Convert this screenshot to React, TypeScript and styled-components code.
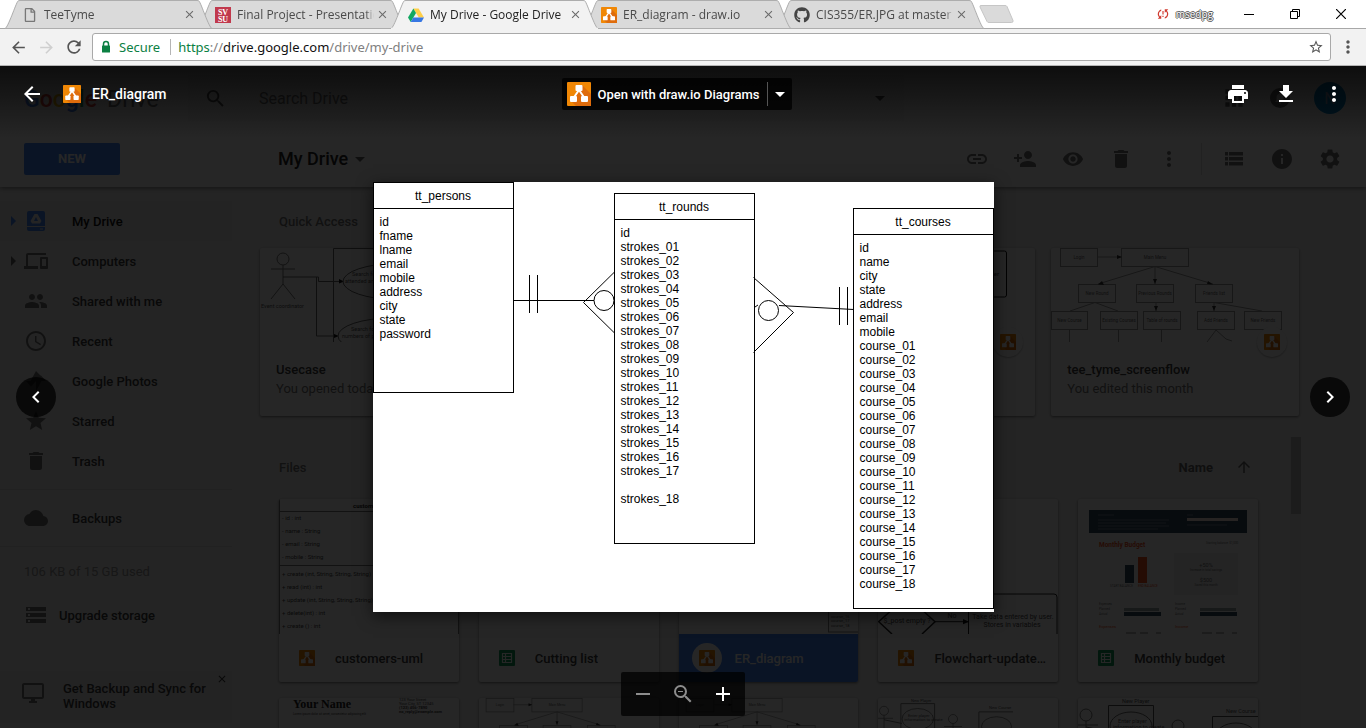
import React from "react";
import styled, { createGlobalStyle, css } from "styled-components";
import {
  MdAdd,
  MdArrowBack,
  MdArrowForward,
  MdArrowDropDown,
  MdArrowUpward,
  MdApps,
  MdChevronLeft,
  MdChevronRight,
  MdClose,
  MdCloud,
  MdDelete,
  MdDevices,
  MdInfo,
  MdInsertLink,
  MdMoreVert,
  MdNotifications,
  MdPeople,
  MdPersonAdd,
  MdPrint,
  MdRefresh,
  MdRemove,
  MdSchedule,
  MdSearch,
  MdSettings,
  MdStar,
  MdStarBorder,
  MdStorage,
  MdSyncProblem,
  MdVisibility,
  MdZoomOut,
} from "react-icons/md";
import { FaGithub, FaRegFile } from "react-icons/fa";

const GlobalStyle = createGlobalStyle`
  *, *::before, *::after { box-sizing: border-box; }
  body { margin: 0; overflow: hidden; font-family: Roboto, sans-serif; }
  button { border: 0; padding: 0; background: none; font: inherit; color: inherit; cursor: pointer; }
  ul { list-style: none; margin: 0; padding: 0; }
  h1, h2, h3, p { margin: 0; font-weight: inherit; font-size: inherit; }
  svg { display: block; flex: none; }
`;

/* ---------- browser frame ---------- */

const Window = styled.div`
  display: flex;
  flex-direction: column;
  height: 100vh;
`;

const TabStrip = styled.div`
  display: flex;
  align-items: stretch;
  height: 29px;
  padding-left: 5px;
  background: #fff;
  border-bottom: 1px solid #a8a8a8;
  font-family: "Open Sans", "Noto Sans", sans-serif;
`;

const Tab = styled.div<{ $active?: boolean; $order: number }>`
  position: relative;
  z-index: ${(p) => (p.$active ? 10 : p.$order)};
  display: flex;
  align-items: center;
  flex: 0 1 207px;
  min-width: 0;
  height: 29px;
  margin-right: -14px;
  padding: 0 16px 0 17px;
  color: ${(p) => (p.$active ? "#222" : "#4a4a4a")};
  font-size: 12px;
`;

const TabShape = styled.svg`
  position: absolute;
  inset: 0;
  width: 100%;
  height: 100%;
  z-index: -1;
`;

const TabIcon = styled.span`
  display: flex;
  justify-content: center;
  width: 16px;
  margin-right: 6px;
`;

const TabTitle = styled.span`
  flex: 1;
  min-width: 0;
  margin-right: 2px;
  overflow: hidden;
  white-space: nowrap;
  mask-image: linear-gradient(to right, #000 94%, transparent);
`;

const TabClose = styled.button`
  display: flex;
  color: #6b6b6b;
`;

const NewTab = styled.button`
  display: flex;
  align-items: center;
  margin-left: 9px;
`;

const WindowTools = styled.div`
  display: flex;
  align-items: center;
  margin-left: auto;
  height: 27px;
  padding-right: 2px;
`;

const ProfileName = styled.span`
  margin: 0 13px 0 6px;
  font-size: 10px;
  color: #fff;
  text-shadow: 1px 0 #555, -1px 0 #555, 0 1px #555, 0 -1px #555;
`;

const WindowButton = styled.button`
  display: flex;
  justify-content: center;
  width: 46px;
`;

const AddressRow = styled.div`
  display: flex;
  align-items: center;
  gap: 4px;
  height: 37px;
  padding: 0 6px;
  background: #f2f2f2;
  border-bottom: 1px solid #b4b4b4;
  color: #5a5a5a;
`;

const ToolButton = styled.button<{ $dim?: boolean }>`
  display: flex;
  justify-content: center;
  width: 24px;
  color: ${(p) => (p.$dim ? "#cfcfcf" : "#555")};
`;

const Omnibox = styled.div`
  display: flex;
  align-items: center;
  flex: 1;
  height: 28px;
  margin: 0 1px 0 2px;
  padding: 0 6px;
  background: #fff;
  border: 1px solid #a9a9a9;
  border-radius: 3px;
  font-family: "Noto Sans", "Open Sans", sans-serif;
  font-size: 13px;
  color: #0b8043;
`;

const SecureLabel = styled.span`
  margin: 0 7px 0 6px;
  padding-right: 10px;
  border-right: 1px solid #b5b5b5;
  line-height: 16px;
`;

const Url = styled.div`
  flex: 1;
  outline: 0;
  white-space: nowrap;
  color: #808080;
`;

const UrlPart = styled.span<{ $tone: "scheme" | "host" }>`
  color: ${(p) => (p.$tone === "scheme" ? "#0b8043" : "#111")};
`;

/* ---------- Drive page ---------- */

const Viewport = styled.main`
  position: relative;
  flex: 1;
  min-height: 0;
  overflow: hidden;
`;

const Drive = styled.div`
  display: flex;
  flex-direction: column;
  height: 100%;
  background: #f1f1f1;
  color: #3c3c3c;
  font-size: 13px;
`;

const DriveTop = styled.header`
  position: relative;
  background: #fff;
  box-shadow: 0 1px 5px rgba(0, 0, 0, 0.5);
`;

const DriveHeader = styled.div`
  display: flex;
  align-items: center;
  height: 64px;
  padding: 0 20px 0 24px;
`;

const Logo = styled.div`
  width: 164px;
  padding-top: 2px;
  font-size: 23px;
  color: #777;
`;

const LogoLetter = styled.span<{ $color: string }>`
  font-weight: 500;
  color: ${(p) => p.$color};
`;

const LogoProduct = styled.span`
  margin-left: 10px;
`;

const SearchBox = styled.label`
  display: flex;
  align-items: center;
  flex: 0 1 716px;
  height: 46px;
  padding: 0 12px 0 16px;
  gap: 30px;
  background: #f5f5f5;
  color: #555;
`;

const SearchInput = styled.input`
  flex: 1;
  min-width: 0;
  border: 0;
  outline: 0;
  background: none;
  font: 16px Roboto, sans-serif;
  &::placeholder {
    color: #757575;
    opacity: 1;
  }
`;

const AccountTools = styled.div`
  display: flex;
  align-items: center;
  gap: 24px;
  margin-left: auto;
`;

const Bell = styled.button`
  display: flex;
  align-items: center;
  justify-content: center;
  width: 20px;
  height: 20px;
  border-radius: 50%;
  background: #6b6b6b;
  color: #ddd;
`;

const Avatar = styled.button`
  width: 32px;
  height: 32px;
  border-radius: 50%;
  background: #0288d1;
  color: #9ac;
  font-size: 16px;
`;

const DriveToolbar = styled.div`
  display: flex;
  align-items: center;
  height: 57px;
  padding: 0 24px;
`;

const NewButton = styled.button`
  width: 96px;
  height: 32px;
  border-radius: 2px;
  background: #4285f4;
  color: #fff;
  font-size: 13px;
  font-weight: 700;
`;

const Breadcrumb = styled.h1`
  display: flex;
  align-items: center;
  margin-left: 158px;
  font-size: 18px;
  font-weight: 500;
  color: #222;
`;

const ActionGroup = styled.div<{ $divided?: boolean }>`
  display: flex;
  align-items: center;
  gap: 24px;
  color: #757575;
  ${(p) =>
    p.$divided
      ? css`
          height: 32px;
          margin-left: 20px;
          padding-left: 20px;
          border-left: 1px solid #ddd;
        `
      : css`
          margin-left: auto;
        `}
`;

const IconButton = styled.button`
  display: flex;
  align-items: center;
  justify-content: center;
  width: 24px;
  height: 24px;
`;

const DriveBody = styled.div`
  display: flex;
  flex: 1;
  min-height: 0;
`;

const Sidebar = styled.aside`
  display: flex;
  flex-direction: column;
  width: 232px;
  padding-top: 14px;
  font-weight: 500;
`;

const NavList = styled.ul`
  padding-bottom: 8px;
  margin-bottom: 8px;
  border-bottom: 1px solid #dcdcdc;
`;

const NavLink = styled.a<{ $active?: boolean }>`
  display: flex;
  align-items: center;
  height: 40px;
  padding-left: 8px;
  color: ${(p) => (p.$active ? "#111" : "#3c3c3c")};
  background: ${(p) => (p.$active ? "#e8e8e8" : "transparent")};
  text-decoration: none;
`;

const NavArrow = styled.span<{ $blue?: boolean }>`
  display: flex;
  width: 16px;
  color: ${(p) => (p.$blue ? "#4285f4" : "#666")};
`;

const NavIcon = styled.span`
  display: flex;
  width: 48px;
  color: #757575;
`;

const Quota = styled.p`
  padding: 9px 24px 7px;
  line-height: 16px;
  font-weight: 400;
  color: #999;
`;

const Upgrade = styled.a`
  display: flex;
  align-items: center;
  gap: 11px;
  height: 32px;
  margin-top: 12px;
  padding-left: 24px;
  color: #3c3c3c;
  text-decoration: none;
`;

const Promo = styled.div`
  display: flex;
  height: 52px;
  margin-top: 40px;
  padding: 10px 4px 0 21px;
  background: #e9e9e9;
  line-height: 15px;
  color: #3c3c3c;
`;

const PromoText = styled.p`
  flex: 1;
  padding-left: 18px;
`;

const PromoClose = styled.button`
  display: flex;
  align-self: flex-start;
  margin-top: -8px;
`;

const Content = styled.section`
  display: flex;
  flex-direction: column;
  flex: 1;
  min-width: 0;
  padding-left: 28px;
`;

const SectionTitle = styled.h2`
  font-weight: 500;
  color: #757575;
`;

const QuickTitle = styled(SectionTitle)`
  height: 61px;
  padding: 26px 0 0 19px;
  line-height: 18px;
`;

const QuickGrid = styled.div`
  display: grid;
  grid-template-columns: repeat(4, 1fr);
  gap: 16px;
  padding-right: 67px;
`;

const Card = styled.article`
  min-width: 0;
  border-radius: 2px;
  background: #fff;
  box-shadow: 0 1px 3px rgba(0, 0, 0, 0.5);
`;

const QuickCard = styled(Card)`
  height: 168px;
`;

const Thumb = styled.div<{ $height: number }>`
  position: relative;
  height: ${(p) => p.$height}px;
  svg {
    overflow: hidden;
  }
`;

const Badge = styled.span`
  position: absolute;
  right: 12px;
  bottom: -15px;
  display: flex;
  align-items: center;
  justify-content: center;
  width: 30px;
  height: 30px;
  border-radius: 50%;
  background: #fff;
  box-shadow: 0 1px 2px rgba(0, 0, 0, 0.3);
`;

const QuickText = styled.div`
  padding: 18px 16px 0;
  line-height: 19px;
  white-space: nowrap;
  color: #757575;
`;

const QuickName = styled.h3`
  font-weight: 500;
  color: #3c3c3c;
`;

const FilesArea = styled.div`
  display: flex;
  flex: 1;
  min-height: 0;
  margin-top: 21px;
  padding: 0 65px 0 19px;
  overflow: hidden;
`;

const FilesColumn = styled.div`
  flex: 1;
  min-width: 0;
`;

const FilesHeader = styled.div`
  display: flex;
  align-items: center;
  justify-content: space-between;
  height: 62px;
  padding: 0 5px 2px 0;
`;

const SortButton = styled.button`
  display: flex;
  align-items: center;
  gap: 22px;
  font-weight: 700;
  color: #666;
`;

const FileGrid = styled.div`
  display: grid;
  grid-template-columns: repeat(5, 1fr);
  gap: 16px 20px;
`;

const ScrollTrack = styled.div`
  width: 11px;
  margin-left: 32px;
  padding-left: 1px;
  background: #eaeaea;
`;

const ScrollThumb = styled.div`
  height: 77px;
  background: #b8b8b8;
`;

const FileCard = styled(Card)`
  overflow: hidden;
`;

const FileFooter = styled.div<{ $selected?: boolean }>`
  display: flex;
  align-items: center;
  height: 48px;
  padding: 0 12px 0 13px;
  gap: 13px;
  color: ${(p) => (p.$selected ? "#fff" : "#3c3c3c")};
  background: ${(p) => (p.$selected ? "#4285f4" : "transparent")};
`;

const FileIcon = styled.span<{ $selected?: boolean }>`
  display: flex;
  align-items: center;
  justify-content: center;
  flex: none;
  width: 30px;
  height: 30px;
  border-radius: 50%;
  background: ${(p) => (p.$selected ? "#fff" : "transparent")};
`;

const FileName = styled.h3`
  overflow: hidden;
  text-overflow: ellipsis;
  white-space: nowrap;
  font-weight: 500;
`;

/* ---------- file viewer ---------- */

const Viewer = styled.div`
  position: absolute;
  inset: 0;
  display: flex;
  flex-direction: column;
  background: linear-gradient(rgba(0, 0, 0, 0.65), transparent 72px),
    rgba(0, 0, 0, 0.85);
  color: #fff;
`;

const ViewerBar = styled.div`
  display: grid;
  grid-template-columns: 1fr auto 1fr;
  align-items: center;
  height: 56px;
  padding: 0 20px;
  font-size: 14px;
  font-weight: 500;
`;

const ViewerTitle = styled.div`
  display: flex;
  align-items: center;
`;

const TitleIcon = styled.span`
  margin: 0 11px 0 19px;
`;

const OpenWith = styled.div`
  display: flex;
  align-items: center;
  height: 32px;
  margin-right: 12px;
  border-radius: 2px;
  background: rgba(0, 0, 0, 0.8);
`;

const OpenButton = styled.button`
  display: flex;
  align-items: center;
  gap: 6px;
  padding: 0 7px 0 5px;
  font-size: 13px;
`;

const OpenMenu = styled.button`
  display: flex;
  align-items: center;
  justify-content: center;
  width: 25px;
  height: 24px;
  border-left: 1px solid #555;
`;

const ViewerActions = styled.div`
  display: flex;
  justify-content: flex-end;
  gap: 24px;
`;

const Stage = styled.div`
  display: flex;
  align-items: center;
  justify-content: space-between;
  flex: 1;
  min-height: 0;
  padding: 0 16px;
`;

const RoundButton = styled.button`
  display: flex;
  align-items: center;
  justify-content: center;
  width: 40px;
  height: 40px;
  border-radius: 50%;
  background: rgba(0, 0, 0, 0.75);
`;

const ZoomRow = styled.div`
  display: flex;
  justify-content: center;
  padding-bottom: 12px;
`;

const ZoomBar = styled.div`
  display: flex;
  align-items: center;
  justify-content: center;
  gap: 16px;
  width: 124px;
  height: 44px;
  border-radius: 2px;
  background: rgba(0, 0, 0, 0.75);
`;

const ZoomButton = styled(IconButton)<{ $dim?: boolean }>`
  color: ${(p) => (p.$dim ? "#8d8d8d" : "#fff")};
`;

/* ---------- ER diagram ---------- */

const Diagram = styled.figure`
  position: relative;
  width: 621px;
  height: 430px;
  margin: 0;
  background: #fff;
  color: #000;
  box-shadow: 0 4px 15px rgba(0, 0, 0, 0.6);
  font: 12px/14px "Liberation Sans", Arial, sans-serif;
`;

const Connectors = styled.svg`
  position: absolute;
  inset: 0;
`;

const Entity = styled.section<{ $x: number; $y: number; $height: number }>`
  position: absolute;
  left: ${(p) => p.$x}px;
  top: ${(p) => p.$y}px;
  width: 141px;
  height: ${(p) => p.$height}px;
  border: 1px solid #000;
`;

const EntityName = styled.h3`
  height: 26px;
  border-bottom: 1px solid #000;
  line-height: 26px;
  text-align: center;
`;

const Fields = styled.ul`
  padding: 6px;
`;

const Field = styled.li`
  height: 14px;
`;

/* ---------- small drawings ---------- */

const DrawioIcon = ({ size }: { size: number }) => (
  <svg width={size} height={size} viewBox="0 0 24 24">
    <rect width="24" height="24" rx="1" fill="#f08705" />
    <path d="M15.5 3.5 24 12v12H9l-5-5 6-8z" fill="#df6c0c" />
    <path d="M12 8 6.5 16M12 8l5.500 8" stroke="#fff" strokeWidth="2" />
    <rect x="8.500" y="3" width="7" height="6" rx="1" fill="#fff" />
    <rect x="3" y="14" width="7" height="6" rx="1" fill="#fff" />
    <rect x="14" y="14" width="7" height="6" rx="1" fill="#fff" />
  </svg>
);

const SheetIcon = () => (
  <svg width="16" height="16" viewBox="0 0 16 16">
    <rect width="16" height="16" rx="1" fill="#0f9d58" />
    <path d="M3.500 3.500h9v9h-9zM3.500 6.500h9M3.500 9.500h9M6.500 3.500v9" fill="none" stroke="#fff" strokeWidth="1.200" />
  </svg>
);

const DriveLogo = () => (
  <svg width="16" height="16" viewBox="0 0 16 16">
    <path d="M5.400 1.500h5.200L16 10.500h-5.200z" fill="#ffcf48" />
    <path d="M5.400 1.500 8 6 2.700 15 0 10.500z" fill="#11a861" />
    <path d="M5.300 10.500H16L13.400 15H2.700z" fill="#3777e3" />
  </svg>
);

const SvsuIcon = () => (
  <svg width="16" height="16" viewBox="0 0 16 16">
    <rect width="16" height="16" fill="#c1394d" />
    <g fill="#fff" fontFamily="Liberation Serif, serif" fontWeight="700" fontSize="8" textAnchor="middle">
      <text x="8" y="7.500">SV</text>
      <text x="8" y="14.500">SU</text>
    </g>
  </svg>
);

const PadlockIcon = () => (
  <svg width="14" height="14" viewBox="0 0 14 14">
    <path d="M4.500 6V4a2.500 2.500 0 0 1 5 0v2" fill="none" stroke="#0b8043" strokeWidth="1.500" />
    <rect x="3" y="5.500" width="8" height="7" rx="0.500" fill="#0b8043" />
  </svg>
);

const DownloadIcon = () => (
  <svg width="24" height="24" viewBox="0 0 24 24" fill="currentColor">
    <path d="M19 9h-4V3H9v6H5l7 7 7-7zM5 18v2h14v-2H5z" />
  </svg>
);

const MonitorIcon = () => (
  <svg width="24" height="24" viewBox="0 0 24 24" fill="#757575">
    <path d="M21 2H3c-1.100 0-2 .9-2 2v12c0 1.100.9 2 2 2h7v2H8v2h8v-2h-2v-2h7c1.100 0 2-.9 2-2V4c0-1.100-.9-2-2-2zm0 14H3V4h18v12z" />
  </svg>
);

const ListViewIcon = () => (
  <svg width="24" height="24" viewBox="0 0 24 24" fill="currentColor">
    <path d="M3 5h3v3.500H3zM7 5h14v3.500H7zM3 10h3v3.500H3zM7 10h14v3.500H7zM3 15h3v3.500H3zM7 15h14v3.500H7z" />
  </svg>
);

const MyDriveIcon = () => (
  <svg width="24" height="24" viewBox="0 0 24 24">
    <path d="M5 2h14a2 2 0 0 1 2 2v13H3V4a2 2 0 0 1 2-2zM3 18h18v2a2 2 0 0 1-2 2H5a2 2 0 0 1-2-2z" fill="#4285f4" />
    <path d="M10.500 5h3l4 7-1.500 2.500H8L6.500 12zM12 8l-2 4h4z" fill="#f1f1f1" fillRule="evenodd" />
    <path d="M16 19.500h3v1h-3z" fill="#f1f1f1" />
  </svg>
);

const PhotosIcon = () => (
  <svg width="24" height="24" viewBox="0 0 24 24" fill="currentColor">
    <path d="M12 2v10H6.500zM12 2l5 5-5 5zM22 12H12l5-5.500zM12 22V12h5.500zM2 12h10l-5 5.500z" />
  </svg>
);

const Triangle = () => (
  <svg width="10" height="10" viewBox="0 0 10 10" fill="currentColor">
    <path d="M3 0l5 5-5 5z" />
  </svg>
);

/* ---------- thumbnails ---------- */

const Node = ({ x, y, w = 37, h = 18, label }: { x: number; y: number; w?: number; h?: number; label: string }) => (
  <g>
    <rect x={x} y={y} width={w} height={h} fill="none" stroke="#999" />
    <text x={x + w / 2} y={y + h / 2 + 1.5} textAnchor="middle" fontSize="4.500" fill="#666">
      {label}
    </text>
  </g>
);

const ScreenflowThumb = ({ height, scale = 1 }: { height: number; scale?: number }) => (
  <svg width="100%" height={height}>
    <g transform={`scale(${scale})`}>
      <Node x={9.5} y={0.5} label="Login" />
      <Node x={70.5} y={0.5} w={67} label="Main Menu" />
      <Node x={27.5} y={36.5} label="New Round" />
      <Node x={85.5} y={36.5} label="Previous Rounds" />
      <Node x={144.5} y={36.500} label="Friends list" />
      <Node x={0.5} y={63.5} w={36} label="New Course" />
      <Node x={49.5} y={63.5} label="Existing Courses" />
      <Node x={92.5} y={63.5} label="Table of rounds" />
      <Node x={146.5} y={63.5} label="Add Friends" />
      <Node x={193.5} y={63.5} label="New Friends" />
      <path
        d="M46 9h24M104 18.500 47 36M104 18.500V36M104 18.500 162 36M44 54.500 19 63M44 54.500 67 63M105 54.500V63M163 54.500V63M163 54.500 211 63M18.500 82v12M67.500 82v12M110.500 82v12M156 94l9-12 10 9 6 2"
        fill="none"
        stroke="#999"
      />
      <path d="M66 7l5 2-5 2zM102 31h4l-2 5zM51 33l-4 3.500 6 .5zM157 33l5 3.500-6-.5zM103 58h4l-2 5zM161 58h4l-2 5z" fill="#333" />
    </g>
  </svg>
);

const Actor = ({ x, y }: { x: number; y: number }) => (
  <g transform={`translate(${x} ${y})`} fill="none" stroke="#777">
    <circle cx="12" cy="6" r="6" />
    <path d="M12 12v19L0 46M12 31l12 15M0 16h24" />
  </g>
);

const UsecaseThumb = () => (
  <svg width="100%" height="94" fontSize="5.500" fill="#555">
    <Actor x={11} y={5} />
    <path d="M73.500 94V.5H230M23 29h35.500v4.500H82M56.500 29v59H75" fill="none" stroke="#666" />
    <path d="M79 31l5 2.500-5 2zM74 86l5 2-5 2z" fill="#111" />
    <ellipse cx="137" cy="33.500" rx="54" ry="18" fill="none" stroke="#666" />
    <ellipse cx="132" cy="88" rx="54" ry="18" fill="none" stroke="#666" />
    <text x="92" y="28">Search for events</text>
    <text x="85" y="35">attended and hosted</text>
    <text x="1" y="60">Event coordinator</text>
    <text x="91" y="83">Search for the</text>
    <text x="82" y="90">numbers of people</text>
  </svg>
);

const FlowQuickThumb = () => (
  <svg width="100%" height="94" fontSize="6" fill="#333">
    <rect x="120" y="3" width="98.500" height="46" rx="2" fill="none" stroke="#111" />
    <text x="211" y="28" textAnchor="end">Create player</text>
  </svg>
);

const umlRows: [number, string][] = [
  [21, "- id : int"],
  [34, "- name : String"],
  [47, "- email : String"],
  [60, "- mobile : String"],
  [77, "+ create (int, String, String, String)"],
  [90, "+ read (int) : int"],
  [103, "+ update (int, String, String, String)"],
  [116, "+ delete(int) : int"],
  [129, "+ create () : int"],
];

const UmlThumb = () => (
  <svg width="100%" height="135" fontSize="6" fill="#444">
    <path d="M.5 0v135M0 12.500h180M0 66.500h180M179.500 0v135" stroke="#777" />
    <text x="74" y="9" fontWeight="700" fill="#222">customers</text>
    {umlRows.map(([y, text]) => (
      <text key={text} x="3" y={y}>{text}</text>
    ))}
  </svg>
);

const ErThumb = () => (
  <svg width="100%" height="135" fontSize="4" fill="#555">
    <rect x="149.500" y="10" width="30" height="123" fill="none" stroke="#888" />
    <text x="152" y="119">course_16</text>
    <text x="152" y="123">course_17</text>
    <text x="152" y="128">course_18</text>
  </svg>
);

const FlowchartThumb = () => (
  <svg width="100%" height="135" fontSize="7" fill="#444">
    <path d="M14 135 .7 122.700 16 109h26l15 13.700L44 135" fill="none" stroke="#222" strokeWidth="1.500" />
    <path d="M57 122.700h33M90.500 135V95H176a3 3 0 0 1 3 3v37" fill="none" stroke="#222" />
    <path d="M85 120l6 2.700-6 2.500z" fill="#111" />
    <g textAnchor="middle">
      <text x="29" y="124">$_post empty ?</text>
      <text x="74" y="119">No</text>
      <text x="135" y="120">Take data entered by user.</text>
      <text x="134" y="128">Stores in variables</text>
    </g>
  </svg>
);

const BudgetThumb = () => (
  <svg width="100%" height="135" fontSize="3" fill="#777">
    <rect x="11" y="11" width="158" height="23" fill="#334960" />
    <rect x="109" y="19" width="51" height="3" fill="#fbe9e0" />
    <path d="M20 16h16M20 21h71M20 24h68M20 27h71M20 30h60M109 16h6M109 26h40" stroke="#6d8095" />
    <text x="21" y="48" fontSize="6.500" fontWeight="700" fill="#f4511e">Monthly Budget</text>
    <text x="128" y="45">Starting balance: $1,000</text>
    <rect x="47" y="66" width="9" height="18" fill="#334960" />
    <rect x="60" y="58" width="9" height="26" fill="#f4511e" />
    <text x="32" y="88">START BALANCE</text>
    <text x="60" y="88" fill="#f4511e">END BALANCE</text>
    <rect x="96" y="54" width="64" height="42" fill="#eee" />
    <g textAnchor="middle">
      <text x="128" y="68" fontSize="5.500">+50%</text>
      <text x="128" y="72">Increase in total savings</text>
      <text x="128" y="83" fontSize="5.500">$500</text>
      <text x="128" y="87">Saved this month</text>
    </g>
    <text x="21" y="106">Expenses</text>
    <text x="97" y="106">Income</text>
    <text x="21" y="111">Planned</text>
    <text x="21" y="116">Actual</text>
    <text x="97" y="111">Planned</text>
    <text x="97" y="116">Actual</text>
    <path d="M46 110.500h35M122 110.500h36" stroke="#9aa" strokeWidth="3" />
    <path d="M46 115h37M122 115h37" stroke="#334960" strokeWidth="4" />
    <text x="21" y="129" fontSize="4" fill="#f4511e">Expenses</text>
    <text x="97" y="129" fontSize="4" fill="#f4511e">Income</text>
    <path d="M48 134h10M62 134h8M78 134h5M124 134h10M138 134h8M154 134h5" stroke="#777" />
  </svg>
);

const ResumeThumb = () => (
  <svg width="100%" height="135" fontSize="4" fill="#444">
    <text x="14" y="10" fontFamily="Liberation Serif, serif" fontSize="12" fontWeight="700" fill="#222">Your Name</text>
    <text x="14" y="17" fontSize="3">Lorem ipsum dolor sit amet, consectetur adipiscing elit</text>
    <text x="120" y="3">123 Your Street</text>
    <text x="120" y="7">Your City, ST 12345</text>
    <text x="120" y="11" fontWeight="700">(123) 456-7890</text>
    <text x="120" y="15" fontWeight="700">no_reply@example.com</text>
  </svg>
);

const PlayerThumb = ({ scale = 1 }: { scale?: number }) => (
  <svg width="100%" height="135" fontSize="5.500" fill="#555">
    <g transform={`scale(${scale})`}>
      <Actor x={-4} y={11} />
      <Actor x={88} y={22} />
      <path d="M30.500 50V7.500h45V50M134.500 50V18.500H180M8 29l24 5" fill="none" stroke="#555" />
      <ellipse cx="53" cy="28" rx="21" ry="14" fill="none" stroke="#666" />
      <ellipse cx="158" cy="38" rx="20" ry="13" fill="none" stroke="#666" />
      <text x="44" y="5">New Player</text>
      <text x="148" y="15">New Course</text>
      <text x="40" y="25">Enter player</text>
      <text x="35" y="31">information to create</text>
    </g>
  </svg>
);

/* ---------- data ---------- */

const tabs = [
  { title: "TeeTyme", icon: <FaRegFile size={14} color="#777" /> },
  { title: "Final Project - Presentation", icon: <SvsuIcon /> },
  { title: "My Drive - Google Drive", icon: <DriveLogo />, active: true },
  { title: "ER_diagram - draw.io", icon: <DrawioIcon size={16} /> },
  { title: "CIS355/ER.JPG at master", icon: <FaGithub size={16} color="#444" /> },
];

const navItems = [
  { label: "My Drive", icon: <MyDriveIcon />, expandable: true, active: true },
  { label: "Computers", icon: <MdDevices size={24} />, expandable: true },
  { label: "Shared with me", icon: <MdPeople size={24} /> },
  { label: "Recent", icon: <MdSchedule size={24} /> },
  { label: "Google Photos", icon: <PhotosIcon /> },
  { label: "Starred", icon: <MdStar size={24} /> },
  { label: "Trash", icon: <MdDelete size={24} /> },
];

const quickFiles = [
  { name: "Usecase", note: "You opened today", thumb: <UsecaseThumb /> },
  { name: "", note: "", thumb: null },
  { name: "", note: "", thumb: <FlowQuickThumb /> },
  { name: "tee_tyme_screenflow", note: "You edited this month", thumb: <ScreenflowThumb height={94} /> },
];

const files = [
  { name: "customers-uml", kind: "drawio", thumb: <UmlThumb /> },
  { name: "Cutting list", kind: "sheet", thumb: null },
  { name: "ER_diagram", kind: "drawio", thumb: <ErThumb />, selected: true },
  { name: "Flowchart-updated.xml", kind: "drawio", thumb: <FlowchartThumb /> },
  { name: "Monthly budget", kind: "sheet", thumb: <BudgetThumb /> },
  { name: "", kind: "sheet", thumb: <ResumeThumb /> },
  { name: "", kind: "drawio", thumb: <ScreenflowThumb height={135} scale={0.75} /> },
  { name: "", kind: "drawio", thumb: <ScreenflowThumb height={135} scale={0.75} /> },
  { name: "", kind: "drawio", thumb: <PlayerThumb scale={0.75} /> },
  { name: "", kind: "drawio", thumb: <PlayerThumb /> },
];

const numbered = (prefix: string, from: number, to: number) =>
  Array.from({ length: to - from + 1 }, (_, i) => `${prefix}_${String(from + i).padStart(2, "0")}`);

const entities = [
  {
    name: "tt_persons", x: 0, y: 0, height: 211,
    fields: ["id", "fname", "lname", "email", "mobile", "address", "city", "state", "password"],
  },
  {
    name: "tt_rounds", x: 241, y: 11, height: 351,
    fields: ["id", ...numbered("strokes", 1, 17), "", "strokes_18"],
  },
  {
    name: "tt_courses", x: 480, y: 26, height: 401,
    fields: ["id", "name", "city", "state", "address", "email", "mobile", ...numbered("course", 1, 18)],
  },
];

/* ---------- page ---------- */

const BrowserFrame = () => (
  <>
    <TabStrip>
      {tabs.map((tab, i) => (
        <Tab key={tab.title} $active={tab.active} $order={tabs.length - i}>
          <TabShape viewBox="0 0 207 29" preserveAspectRatio="none">
            <path
              d="M0 28.500C3 28 11 3 13 1Q13.500.5 15 .5H192Q193.500.5 194 1C196 3 204 28 207 28.500z"
              fill={tab.active ? "#f2f2f2" : "#dadada"}
              stroke="#adadad"
            />
            {tab.active && <path d="M0 28.500h207" stroke="#f2f2f2" strokeWidth="1.500" />}
          </TabShape>
          <TabIcon>{tab.icon}</TabIcon>
          <TabTitle>{tab.title}</TabTitle>
          <TabClose aria-label="Close tab"><MdClose size={13} /></TabClose>
        </Tab>
      ))}
      <NewTab aria-label="New tab">
        <svg width="36" height="18" viewBox="0 0 36 18">
          <path d="M2 .5h24q1.500 0 2 1l6 14q.5 2-1.500 2H10q-1.500 0-2-1L1 2Q.5.5 2 .5z" fill="#dadada" stroke="#c6c6c6" />
        </svg>
      </NewTab>
      <WindowTools>
        <MdSyncProblem size={14} color="#d03a2f" />
        <ProfileName>msedpg</ProfileName>
        <WindowButton aria-label="Minimize">
          <svg width="10" height="10"><path d="M0 5.500h10" stroke="#000" /></svg>
        </WindowButton>
        <WindowButton aria-label="Restore">
          <svg width="10" height="10" fill="none" stroke="#000">
            <path d="M.5 2.500h7v7h-7zM2.500 2.500v-2h7v7h-2" />
          </svg>
        </WindowButton>
        <WindowButton aria-label="Close">
          <svg width="10" height="10"><path d="M0 0l10 10M10 0L0 10" stroke="#000" strokeWidth="1.200" /></svg>
        </WindowButton>
      </WindowTools>
    </TabStrip>
    <AddressRow>
      <ToolButton aria-label="Back"><MdArrowBack size={19} /></ToolButton>
      <ToolButton $dim aria-label="Forward"><MdArrowForward size={19} /></ToolButton>
      <ToolButton aria-label="Reload"><MdRefresh size={20} /></ToolButton>
      <Omnibox>
        <PadlockIcon />
        <SecureLabel>Secure</SecureLabel>
        <Url role="textbox" aria-label="Address" contentEditable suppressContentEditableWarning spellCheck={false}>
          <UrlPart $tone="scheme">https</UrlPart>://<UrlPart $tone="host">drive.google.com</UrlPart>/drive/my-drive
        </Url>
        <MdStarBorder size={16} color="#555" />
      </Omnibox>
      <ToolButton aria-label="Menu"><MdMoreVert size={20} /></ToolButton>
    </AddressRow>
  </>
);

const DrivePage = () => (
  <Drive>
    <DriveTop>
      <DriveHeader>
        <Logo>
          <LogoLetter $color="#4285f4">G</LogoLetter>
          <LogoLetter $color="#ea4335">o</LogoLetter>
          <LogoLetter $color="#fbbc05">o</LogoLetter>
          <LogoLetter $color="#4285f4">g</LogoLetter>
          <LogoLetter $color="#34a853">l</LogoLetter>
          <LogoLetter $color="#ea4335">e</LogoLetter>
          <LogoProduct>Drive</LogoProduct>
        </Logo>
        <SearchBox>
          <MdSearch size={23} />
          <SearchInput aria-label="Search Drive" placeholder="Search Drive" />
          <MdArrowDropDown size={24} />
        </SearchBox>
        <AccountTools>
          <IconButton aria-label="Apps"><MdApps size={26} color="#666" /></IconButton>
          <Bell aria-label="Notifications"><MdNotifications size={14} /></Bell>
          <Avatar>N</Avatar>
        </AccountTools>
      </DriveHeader>
      <DriveToolbar>
        <NewButton>NEW</NewButton>
        <Breadcrumb>My Drive <MdArrowDropDown size={24} color="#666" /></Breadcrumb>
        <ActionGroup>
          <IconButton aria-label="Get link"><MdInsertLink size={24} /></IconButton>
          <IconButton aria-label="Share"><MdPersonAdd size={24} /></IconButton>
          <IconButton aria-label="Preview"><MdVisibility size={22} /></IconButton>
          <IconButton aria-label="Remove"><MdDelete size={24} /></IconButton>
          <IconButton aria-label="More actions"><MdMoreVert size={24} /></IconButton>
        </ActionGroup>
        <ActionGroup $divided>
          <IconButton aria-label="List view"><ListViewIcon /></IconButton>
          <IconButton aria-label="Details"><MdInfo size={24} /></IconButton>
          <IconButton aria-label="Settings"><MdSettings size={24} /></IconButton>
        </ActionGroup>
      </DriveToolbar>
    </DriveTop>
    <DriveBody>
      <Sidebar>
        <NavList>
          {navItems.map((item) => (
            <li key={item.label}>
              <NavLink href="#" $active={item.active}>
                <NavArrow $blue={item.active}>{item.expandable && <Triangle />}</NavArrow>
                <NavIcon>{item.icon}</NavIcon>
                {item.label}
              </NavLink>
            </li>
          ))}
        </NavList>
        <NavList>
          <li>
            <NavLink href="#">
              <NavArrow />
              <NavIcon><MdCloud size={24} /></NavIcon>
              Backups
            </NavLink>
          </li>
        </NavList>
        <Quota>106 KB of 15 GB used</Quota>
        <Upgrade href="#"><MdStorage size={24} color="#757575" />Upgrade storage</Upgrade>
        <Promo>
          <MonitorIcon />
          <PromoText>Get Backup and Sync for Windows</PromoText>
          <PromoClose aria-label="Dismiss"><MdClose size={12} /></PromoClose>
        </Promo>
      </Sidebar>
      <Content>
        <QuickTitle>Quick Access</QuickTitle>
        <QuickGrid>
          {quickFiles.map((file, i) => (
            <QuickCard key={i}>
              <Thumb $height={94}>
                {file.thumb}
                <Badge><DrawioIcon size={16} /></Badge>
              </Thumb>
              <QuickText>
                <QuickName>{file.name}</QuickName>
                <p>{file.note}</p>
              </QuickText>
            </QuickCard>
          ))}
        </QuickGrid>
        <FilesArea>
          <FilesColumn>
            <FilesHeader>
              <SectionTitle>Files</SectionTitle>
              <SortButton>Name <MdArrowUpward size={18} /></SortButton>
            </FilesHeader>
            <FileGrid>
              {files.map((file, i) => (
                <FileCard key={i}>
                  <Thumb $height={135}>{file.thumb}</Thumb>
                  <FileFooter $selected={file.selected}>
                    <FileIcon $selected={file.selected}>
                      {file.kind === "sheet" ? <SheetIcon /> : <DrawioIcon size={16} />}
                    </FileIcon>
                    <FileName>{file.name}</FileName>
                  </FileFooter>
                </FileCard>
              ))}
            </FileGrid>
          </FilesColumn>
          <ScrollTrack><ScrollThumb /></ScrollTrack>
        </FilesArea>
      </Content>
    </DriveBody>
  </Drive>
);

const ErDiagram = () => (
  <Diagram>
    <Connectors width="621" height="430" fill="none" stroke="#000">
      <path d="M140 118.500h81M156.500 93v38M164.500 93v38" />
      <path d="M241 90.500 210.500 120.500 241 150.500" />
      <circle cx="231" cy="118.500" r="10" />
      <path d="M380.500 95.500 420.500 130.500 380.500 170.500M382 125l3-2" />
      <circle cx="395.500" cy="128.500" r="10" />
      <path d="M406 123.500 481 127.500M466.500 105v38M474.500 105v38" />
    </Connectors>
    {entities.map((entity) => (
      <Entity key={entity.name} $x={entity.x} $y={entity.y} $height={entity.height}>
        <EntityName>{entity.name}</EntityName>
        <Fields>
          {entity.fields.map((field, i) => (
            <Field key={i}>{field}</Field>
          ))}
        </Fields>
      </Entity>
    ))}
  </Diagram>
);

const FileViewer = () => (
  <Viewer role="dialog" aria-label="ER_diagram">
    <ViewerBar>
      <ViewerTitle>
        <IconButton aria-label="Close viewer"><MdArrowBack size={24} /></IconButton>
        <TitleIcon><DrawioIcon size={18} /></TitleIcon>
        <h2>ER_diagram</h2>
      </ViewerTitle>
      <OpenWith>
        <OpenButton><DrawioIcon size={24} />Open with draw.io Diagrams</OpenButton>
        <OpenMenu aria-label="Choose app"><MdArrowDropDown size={24} /></OpenMenu>
      </OpenWith>
      <ViewerActions>
        <IconButton aria-label="Print"><MdPrint size={24} /></IconButton>
        <IconButton aria-label="Download"><DownloadIcon /></IconButton>
        <IconButton aria-label="More"><MdMoreVert size={24} /></IconButton>
      </ViewerActions>
    </ViewerBar>
    <Stage>
      <RoundButton aria-label="Previous"><MdChevronLeft size={24} /></RoundButton>
      <ErDiagram />
      <RoundButton aria-label="Next"><MdChevronRight size={24} /></RoundButton>
    </Stage>
    <ZoomRow>
      <ZoomBar>
        <ZoomButton $dim aria-label="Zoom out"><MdRemove size={24} /></ZoomButton>
        <ZoomButton $dim aria-label="Fit to window"><MdZoomOut size={24} /></ZoomButton>
        <ZoomButton aria-label="Zoom in"><MdAdd size={24} /></ZoomButton>
      </ZoomBar>
    </ZoomRow>
  </Viewer>
);

export default function App() {
  return (
    <Window>
      <GlobalStyle />
      <BrowserFrame />
      <Viewport>
        <DrivePage />
        <FileViewer />
      </Viewport>
    </Window>
  );
}
